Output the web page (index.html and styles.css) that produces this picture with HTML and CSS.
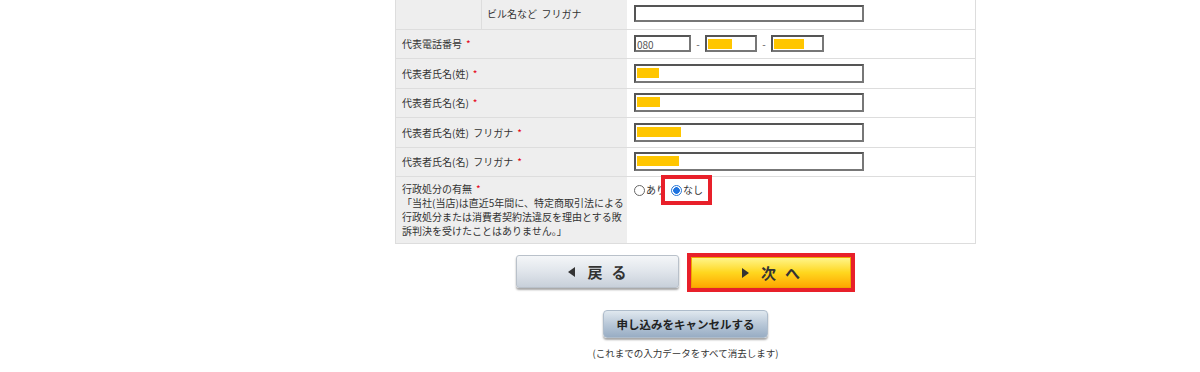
FILE: index.html
```html
<!DOCTYPE html>
<html lang="ja">
<head>
	<meta charset="UTF-8">
	<title>お申し込みフォーム</title>
	<link rel="stylesheet" href="styles.css">
</head>
<body>
	<div id="form">
		<div class="table">
			<div class="row">
				<div class="label split">
					<div class="blank"></div>
					<div class="sub">ビル名など&nbsp;&nbsp;フリガナ</div>
				</div>
				<div class="value">
					<div class="field wide"></div>
				</div>
			</div>
			<div class="row">
				<div class="label">代表電話番号<span class="req">*</span></div>
				<div class="value">
					<div class="field tel1">080</div>
					<span class="dash">-</span>
					<div class="field tel2"><span class="mask" style="width:24px"></span></div>
					<span class="dash">-</span>
					<div class="field tel3"><span class="mask" style="width:30px"></span></div>
				</div>
			</div>
			<div class="row">
				<div class="label">代表者氏名(姓)<span class="req">*</span></div>
				<div class="value">
					<div class="field wide tall"><span class="mask" style="width:22px"></span></div>
				</div>
			</div>
			<div class="row">
				<div class="label">代表者氏名(名)<span class="req">*</span></div>
				<div class="value">
					<div class="field wide tall"><span class="mask" style="width:23px"></span></div>
				</div>
			</div>
			<div class="row">
				<div class="label">代表者氏名(姓)&nbsp;&nbsp;フリガナ<span class="req">*</span></div>
				<div class="value">
					<div class="field wide tall"><span class="mask" style="width:44px"></span></div>
				</div>
			</div>
			<div class="row">
				<div class="label">代表者氏名(名)&nbsp;&nbsp;フリガナ<span class="req">*</span></div>
				<div class="value">
					<div class="field wide tall"><span class="mask" style="width:42px"></span></div>
				</div>
			</div>
			<div class="row last">
				<div class="label multi">
					行政処分の有無<span class="req">*</span><br>
					「当社(当店)は直近5年間に、特定商取引法による<br>
					行政処分または消費者契約法違反を理由とする敗<br>
					訴判決を受けたことはありません。」
				</div>
				<div class="value top">
					<label class="choice"><span class="radio"></span>あり</label>
					<label class="choice mark"><span class="radio on"></span>なし</label>
				</div>
			</div>
		</div>

		<div class="buttons">
			<div class="btn back"><i class="tri-l"></i><span>戻る</span></div>
			<div class="btn next"><i class="tri-r"></i><span>次へ</span></div>
		</div>

		<div class="cancel">
			<div class="btn-cancel">申し込みをキャンセルする</div>
			<p>(これまでの入力データをすべて消去します)</p>
		</div>
	</div>
</body>
</html>
```

FILE: styles.css
```css
*{
	margin: 0;
	padding: 0;
	box-sizing: border-box;
}
body{
	background: #fff;
	font-family: "Noto Sans CJK JP", sans-serif;
	font-size: 10px;
	color: #333;
}
#form{
	width: 581px;
	margin-left: 395px;
	margin-top: -1px;
}
.table{
	border-left: 1px solid #ddd;
	border-right: 1px solid #ddd;
}
.row{
	display: flex;
	height: 29.5px;
	border-bottom: 1px solid #ddd;
}
.row:first-child{
	height: 30.5px;
}
.row.last{
	height: 67px;
}
.label{
	width: 231px;
	background: #eee;
	padding-left: 6px;
	display: flex;
	align-items: center;
	white-space: nowrap;
}
.label.split{
	padding-left: 0;
}
.label .blank{
	width: 86px;
	height: 100%;
	border-right: 1px solid #ddd;
}
.label .sub{
	padding-left: 5px;
}
.label.multi{
	display: block;
	line-height: 14px;
	padding-top: 5px;
}
.req{
	color: #e60012;
	margin-left: 4px;
}
.value{
	flex: 1;
	display: flex;
	align-items: center;
	padding-left: 7px;
}
.value.top{
	align-items: flex-start;
	padding-top: 5px;
}
.field{
	height: 17px;
	border: 2px solid #777;
	border-top-color: #555;
	border-left-color: #555;
	background: #fff;
	padding: 2px 0 0 1px;
	font-size: 10px;
	line-height: 11px;
	color: #555;
}
.field.wide{
	width: 230px;
}
.field.tall{
	height: 19px;
}
.tel1{
	width: 57px;
}
.tel2{
	width: 52px;
}
.tel3{
	width: 53px;
}
.dash{
	width: 14px;
	text-align: center;
	color: #555;
}
.mask{
	display: block;
	height: 10px;
	background: #ffc600;
}
.choice{
	display: inline-flex;
	align-items: center;
	height: 16px;
	line-height: 14px;
}
.choice.mark{
	margin-left: 2px;
	padding: 0 2px 0 3px;
	outline: 4px solid #e8202a;
	outline-offset: 3px;
}
.radio{
	width: 11px;
	height: 11px;
	border: 1px solid #666;
	border-radius: 50%;
	background: #fff;
	margin-right: 1px;
}
.radio.on{
	border-color: #2a78d6;
	background: radial-gradient(circle, #1f74e0 0 3px, #fff 3.6px);
}
.buttons{
	display: flex;
	align-items: center;
	gap: 12px;
	padding-left: 121px;
	margin-top: 11px;
}
.btn{
	display: flex;
	align-items: center;
	justify-content: center;
	font-size: 15px;
	font-weight: bold;
	color: #333;
	letter-spacing: 9px;
	border-radius: 3px;
}
.btn span{
	margin-right: -9px;
}
.back{
	width: 163px;
	height: 33px;
	margin-bottom: 2px;
	background: linear-gradient(#f4f6f8, #e0e5eb 50%, #c8d0da);
	border: 1px solid #b9c1ca;
	box-shadow: 0 2px 2px rgba(0,0,0,.35);
}
.next{
	width: 160px;
	height: 31px;
	background: linear-gradient(#fff58a, #ffd71f 50%, #ffa800);
	border: 1px solid #f0a400;
	border-radius: 0;
	outline: 4px solid #e8202a;
}
.tri-l{
	border-right: 7px solid #333;
	border-top: 5px solid transparent;
	border-bottom: 5px solid transparent;
	margin-right: 12px;
}
.tri-r{
	border-left: 7px solid #333;
	border-top: 5px solid transparent;
	border-bottom: 5px solid transparent;
	margin-right: 12px;
}
.cancel{
	display: flex;
	flex-direction: column;
	align-items: center;
	margin-top: 20px;
}
.btn-cancel{
	width: 165px;
	height: 28px;
	line-height: 27px;
	text-align: center;
	font-size: 11.5px;
	font-weight: bold;
	color: #222;
	background: linear-gradient(#e0e8ef, #b9c8d8 50%, #98adc4);
	border: 1px solid #aebccb;
	border-radius: 4px;
	box-shadow: 0 2px 2px rgba(0,0,0,.35);
}
.cancel p{
	margin-top: 8px;
	font-size: 9.5px;
	line-height: 14px;
}
```
